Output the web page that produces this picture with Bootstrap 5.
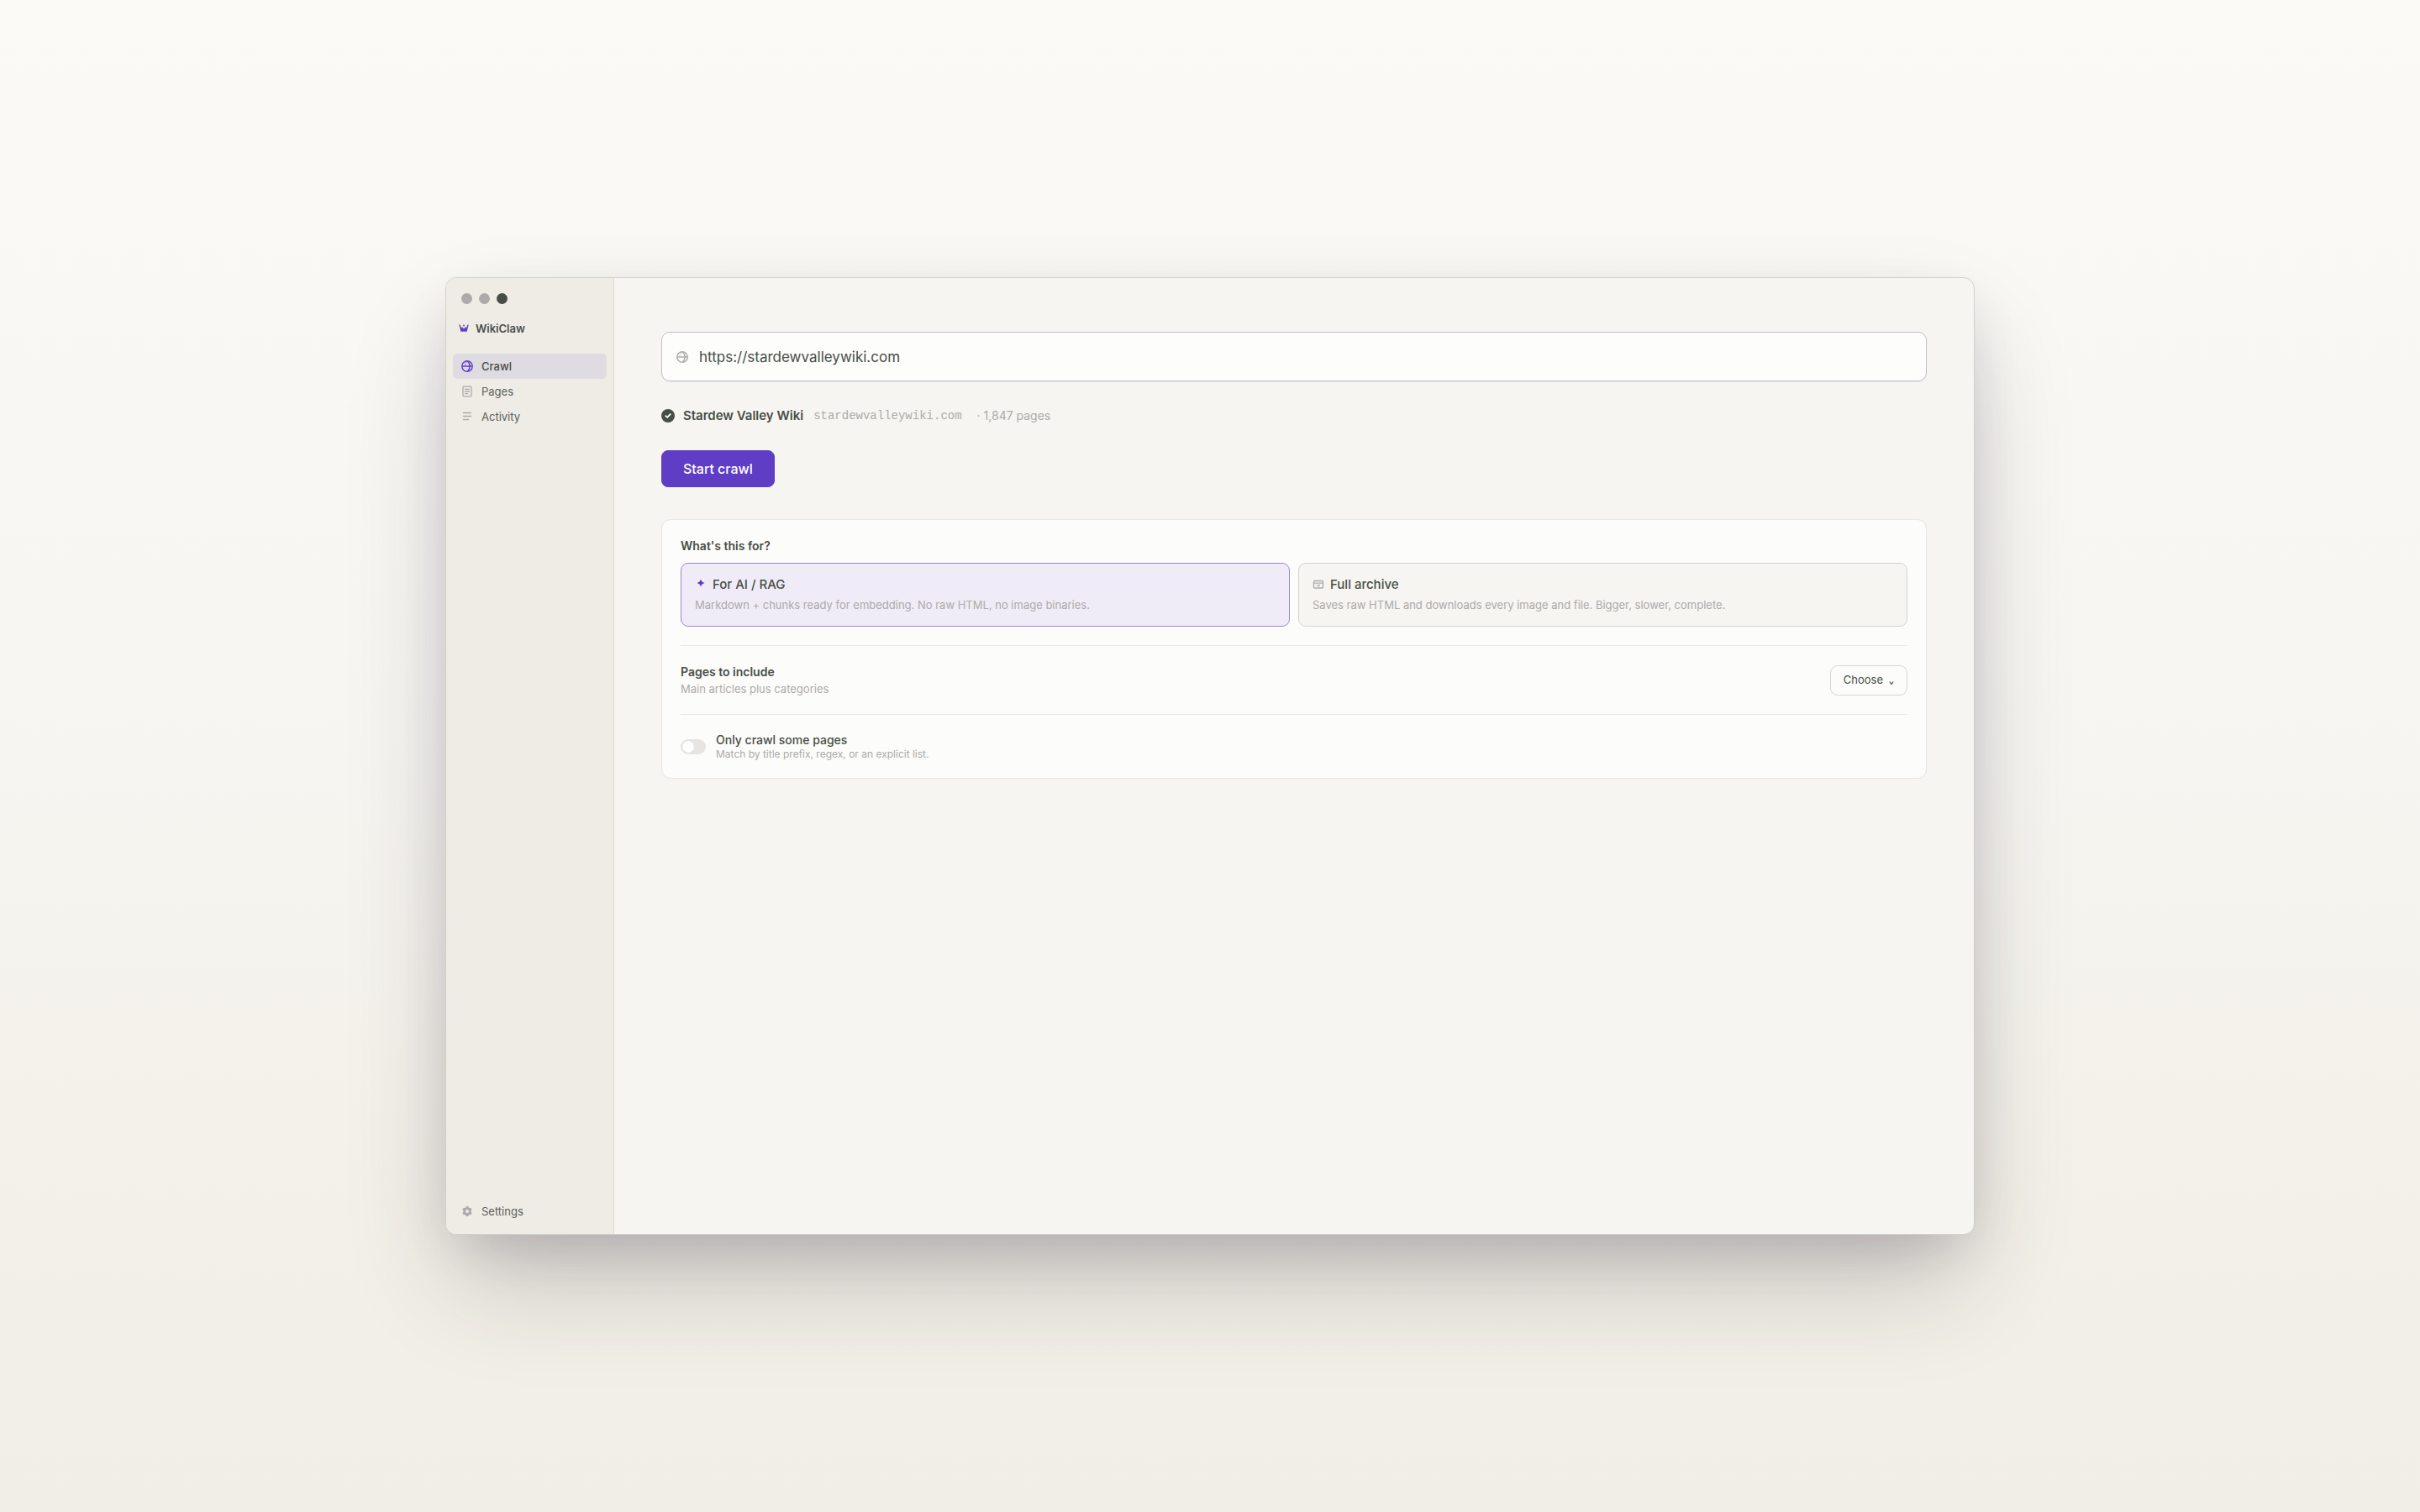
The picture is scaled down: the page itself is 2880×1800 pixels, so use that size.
<!DOCTYPE html>
<html lang="en">
<head>
<meta charset="utf-8">
<meta name="viewport" content="width=device-width, initial-scale=1">
<title>WikiClaw</title>
<link rel="stylesheet" href="https://cdn.jsdelivr.net/npm/bootstrap@5.3.0/dist/css/bootstrap.min.css">
<style>
  :root { --ink: #484e47; --soft: #adaaab; --violet: #5f3dc4; --line: #ebe8e4; }
  body {
    font-family: Inter, "Liberation Sans", sans-serif;
    font-size: 14px;
    line-height: 20px;
    color: var(--ink);
    background: linear-gradient(180deg, #fbfaf6 0%, #f6f5f1 50%, #f3f0e8 80%, #f1eee6 100%);
  }
  .app-window {
    width: 100%;
    max-width: 1820px;
    min-height: 1140px;
    border: 1px solid #d2d0cc;
    border-radius: 13px;
    background: #f6f5f1;
    box-shadow: 0 64px 120px -14px rgba(40, 32, 52, .24), 0 24px 60px -14px rgba(40, 32, 52, .16);
  }
  .side-panel { width: 200px; padding: 18px 8px 12px; background: #efece5; border-right: 1px solid #dcdad5; font-size: 13px; }
  .lights { gap: 8px; padding-left: 10px; }
  .light { width: 13px; height: 13px; border-radius: 50%; background: #aeaaac; }
  .light.active { background: var(--ink); }
  .brand { gap: 8px; margin-top: 19px; padding-left: 7px; font-weight: 600; }
  .brand svg { color: var(--violet); }
  .side-links { margin-top: 20px; }
  .side-link { height: 30px; padding: 0 10px; gap: 10px; border-radius: 5px; color: #5b5f5a; text-decoration: none; }
  .side-link svg { color: #aeaaac; }
  .side-link.active { background: #dfdbe2; color: var(--ink); font-weight: 500; }
  .side-link.active svg { color: var(--violet); }
  .content { padding: 64px 56px; }
  .url-box { height: 59px; padding: 0 17px; gap: 13px; background: #fdfdfb; border: 1px solid #c2bec8; border-radius: 10px; color: var(--soft); box-shadow: 0 1px 1px #ebe7f4; }
  .url-box input { font-size: 17px; line-height: 24px; color: var(--ink); border: 0; outline: 0; background: transparent; padding: 0; }
  .site-status { margin-top: 31px; color: var(--soft); }
  .site-name { margin: 0 12px 0 10px; font-size: 15px; font-weight: 600; color: var(--ink); }
  .site-host { margin-right: 18px; font: 14px/20px "Liberation Mono", monospace; }
  .btn-crawl { margin-top: 31px; height: 44px; padding: 0 25px; border-radius: 8px; font-size: 16px; font-weight: 500; --bs-btn-color: #fff; --bs-btn-bg: var(--violet); --bs-btn-border-color: var(--violet); --bs-btn-hover-color: #fff; --bs-btn-hover-bg: #5334b0; }
  .options-panel { margin-top: 38px; padding: 0 22px; background: #fcfcfa; border: 1px solid #e8e5e2; border-radius: 11px; }
  .part { padding: 21px 0 22px; }
  .part + .part { border-top: 1px solid var(--line); }
  .part-slim { padding: 21px 0 20px; }
  .part-title { font-size: 14px; line-height: 20px; font-weight: 600; }
  .note { font-size: 13px; line-height: 20px; color: var(--soft); }
  .choices { gap: 10px; margin-top: 10px; }
  .choice { padding: 15px 16px; border: 1px solid #d5d3cf; border-radius: 9px; background: #f6f5f1; cursor: pointer; flex: 1 1 0; }
  .choice svg { color: var(--soft); }
  .choice-name { gap: 7px; margin-bottom: 4px; font-size: 15px; font-weight: 500; }
  .btn-check:checked + .choice { background: #f0ecf7; border-color: #9a86d2; }
  .btn-check:checked + .choice svg { color: var(--violet); }
  .btn-choose { height: 36px; padding: 0 15px; gap: 7px; font-size: 13px; border-radius: 9px; --bs-btn-color: var(--ink); --bs-btn-bg: #fcfcfa; --bs-btn-border-color: #d9d6d2; --bs-btn-hover-bg: #f6f5f1; }
  .filter { gap: 12px; padding: 21px 0; }
  .filter .form-check-input {
    width: 30px; height: 18px; margin: 0; border: 0; background-color: #e8e4e1;
    --bs-form-switch-bg: url("data:image/svg+xml,%3csvg xmlns='http://www.w3.org/2000/svg' viewBox='-4 -4 8 8'%3e%3ccircle r='3' fill='%23fff'/%3e%3c/svg%3e");
  }
  .filter-name { font-size: 14px; line-height: 18px; font-weight: 500; }
  .filter-note { font-size: 12px; line-height: 15px; color: var(--soft); }
</style>
<script src="https://cdn.jsdelivr.net/npm/bootstrap@5.3.0/dist/js/bootstrap.bundle.min.js"></script>
</head>
<body>
<svg class="d-none" aria-hidden="true">
  <symbol id="globe" viewBox="0 0 14 14"><g fill="none" stroke="currentColor" stroke-width="1.4"><circle cx="7" cy="7" r="6.2"/><path d="M.8 7h12.4M7.4 1c3.6 3.4 3.6 8.6 0 12"/><path d="M6.6 1C5.2 2.4 4.4 4 4.2 5.6" stroke-width=".6"/></g></symbol>
</svg>
<div class="d-flex align-items-center justify-content-center min-vh-100">
  <div class="app-window d-flex overflow-hidden">
    <aside class="side-panel d-flex flex-column flex-shrink-0">
      <div class="lights d-flex" aria-hidden="true"><span class="light"></span><span class="light"></span><span class="light active"></span></div>
      <div class="brand d-flex align-items-center">
        <svg width="12" height="12" viewBox="0 0 12 12" fill="currentColor" aria-hidden="true"><path d="M.3 1.500h1.300L3 5.800 4 4l2 2.600L8 4l1 1.800 1.400-4.300h1.300L10 8.200l-.6 2.300-1.200-1.400-1 1.400L6 9.100l-1.200 1.400-1-1.400-1.200 1.400L2 8.200z"/><circle cx="6" cy="2.500" r=".9"/></svg>
        <span>WikiClaw</span>
      </div>
      <nav class="side-links d-flex flex-column flex-grow-1">
        <a class="side-link active d-flex align-items-center" href="#crawl" aria-current="page"><svg width="14" height="14"><use href="#globe"/></svg>Crawl</a>
        <a class="side-link d-flex align-items-center" href="#pages"><svg width="14" height="14" viewBox="0 0 14 14" fill="none" stroke="currentColor" stroke-width="1.3"><rect x="2" y="1.2" width="10" height="11.6" rx="1"/><path d="M4 4.300h6M4 7h6M4 9.700h4"/></svg>Pages</a>
        <a class="side-link d-flex align-items-center" href="#activity"><svg width="14" height="14" viewBox="0 0 14 14" fill="none" stroke="currentColor" stroke-width="1.5" stroke-linecap="round"><path d="M2.500 2.500h9M2.500 6.500h9M2.500 10.500h6"/></svg>Activity</a>
        <a class="side-link d-flex align-items-center mt-auto" href="#settings"><svg width="14" height="14" viewBox="0 0 14 14" fill="currentColor" fill-rule="evenodd"><path d="M5.700 1h2.600l.4 1.500 1.100.6 1.500-.4 1.300 2.200-1 1.100v2l1 1.100-1.300 2.200-1.500-.4-1.100.6-.4 1.500H5.700l-.4-1.500-1.100-.6-1.500.4-1.300-2.200 1-1.100V6l-1-1.100 1.300-2.200 1.500.4 1.100-.6zM7 5a2 2 0 1 0 0 4 2 2 0 0 0 0-4z"/></svg>Settings</a>
      </nav>
    </aside>
    <main class="content flex-grow-1">
      <label class="url-box d-flex align-items-center">
        <svg width="14" height="14" role="img" aria-label="Wiki address"><use href="#globe"/></svg>
        <input class="flex-grow-1" type="url" value="https://stardewvalleywiki.com">
      </label>
      <div class="site-status d-flex align-items-center">
        <svg width="16" height="16" viewBox="0 0 16 16" aria-hidden="true"><circle cx="8" cy="8" r="8" fill="#484e47"/><path d="m4.800 7.600 2.400 2.200 4-4.200" fill="none" stroke="#fff" stroke-width="1.8"/></svg>
        <span class="site-name">Stardew Valley Wiki</span><span class="site-host">stardewvalleywiki.com</span><span>· 1,847 pages</span>
      </div>
      <button class="btn btn-crawl d-block" type="button">Start crawl</button>
      <section class="options-panel">
        <fieldset class="part">
          <div class="part-title">What's this for?</div>
          <div class="choices d-flex">
            <input class="btn-check" type="radio" name="goal" id="goal-ai" checked>
            <label class="choice" for="goal-ai">
              <span class="choice-name d-flex align-items-center"><svg width="14" height="14" viewBox="0 0 14 14" fill="currentColor"><path d="M7 .8 8.500 3.500 11.400 5 8.500 6.500 7 9.200 5.500 6.500 2.600 5l2.900-1.500z"/></svg>For AI / RAG</span>
              <span class="note d-block">Markdown + chunks ready for embedding. No raw HTML, no image binaries.</span>
            </label>
            <input class="btn-check" type="radio" name="goal" id="goal-archive">
            <label class="choice" for="goal-archive">
              <span class="choice-name d-flex align-items-center"><svg width="14" height="14" viewBox="0 0 14 14" fill="none" stroke="currentColor" stroke-width="1.3"><rect x="1.500" y="2.500" width="11" height="8.500" rx="1"/><path d="M1.500 5.200h11M5 8h4"/></svg>Full archive</span>
              <span class="note d-block">Saves raw HTML and downloads every image and file. Bigger, slower, complete.</span>
            </label>
          </div>
        </fieldset>
        <div class="part part-slim d-flex align-items-center justify-content-between">
          <div>
            <div class="part-title">Pages to include</div>
            <div class="note">Main articles plus categories</div>
          </div>
          <button class="btn btn-choose d-flex align-items-center" type="button">Choose<svg width="6" height="12" viewBox="0 0 6 12" fill="none" stroke="currentColor" stroke-width="1.2" aria-hidden="true"><path d="m.8 7.500 2.200 3 2.200-3"/></svg></button>
        </div>
        <div class="part filter form-switch d-flex align-items-center">
          <input class="form-check-input float-none" type="checkbox" role="switch" id="filter-pages">
          <label for="filter-pages">
            <span class="filter-name d-block">Only crawl some pages</span>
            <span class="filter-note d-block">Match by title prefix, regex, or an explicit list.</span>
          </label>
        </div>
      </section>
    </main>
  </div>
</div>
</body>
</html>
